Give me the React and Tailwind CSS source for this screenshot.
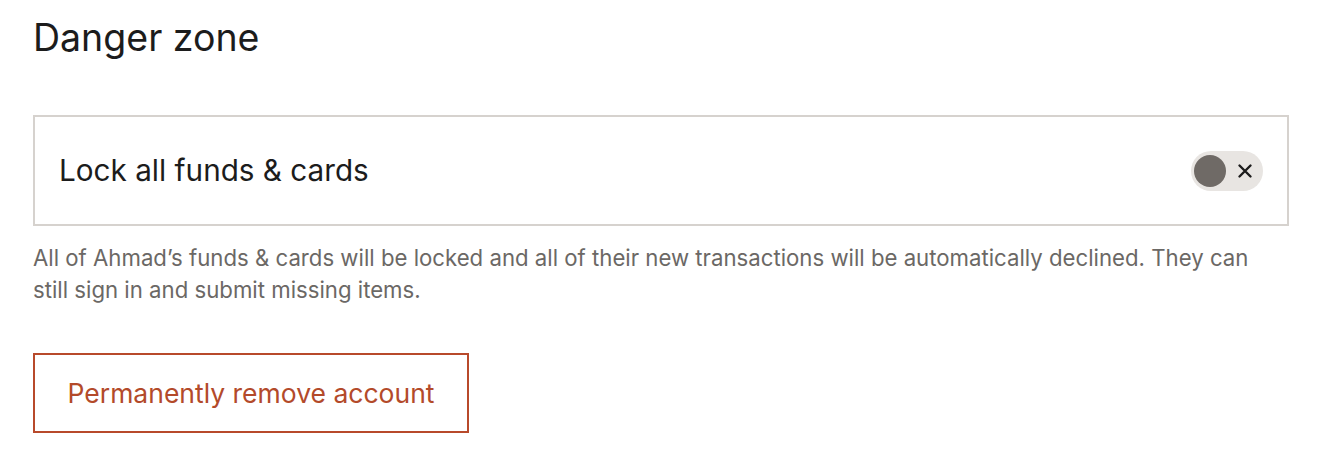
export default function App() {
  return (
    <div className="w-[1322px] h-[464px] bg-white pl-[33px] pr-[33px] pt-[14px]" style={{ fontFamily: 'Inter, "Noto Sans", sans-serif' }}>
      <h2 className="text-[37.5px] leading-[48px] text-[#1c1c1c] font-normal">Danger zone</h2>
      <div className="mt-[53px] border-2 border-[#d6d2ce] h-[111px] flex items-center justify-between pl-[24px] pr-[24px]">
        <span className="text-[29.7px] text-[#1c1c1c]">Lock all funds &amp; cards</span>
        <div className="w-[72px] h-[40px] rounded-full bg-[#e8e5e2] flex items-center justify-between pl-[3px] pr-[10px]">
          <div className="w-[32px] h-[32px] rounded-full bg-[#6f6a66]" />
          <svg width="16" height="16" viewBox="0 0 16 16" fill="none" stroke="#1c1c1c" strokeWidth="2.4" strokeLinecap="round">
            <path d="M2.5 2.5 L13.5 13.5 M13.5 2.5 L2.5 13.5" />
          </svg>
        </div>
      </div>
      <p className="mt-[16px] text-[22.2px] leading-[32px] text-[#6b6865]">
        All of Ahmad’s funds &amp; cards will be locked and all of their new transactions will be automatically declined. They can still sign in and submit missing items.
      </p>
      <button className="mt-[47px] border-2 border-[#b84a2b] h-[80px] w-[436px] flex items-center justify-center pt-[2px] text-[26.5px] text-[#b34a2a]">
        Permanently remove account
      </button>
    </div>
  );
}
